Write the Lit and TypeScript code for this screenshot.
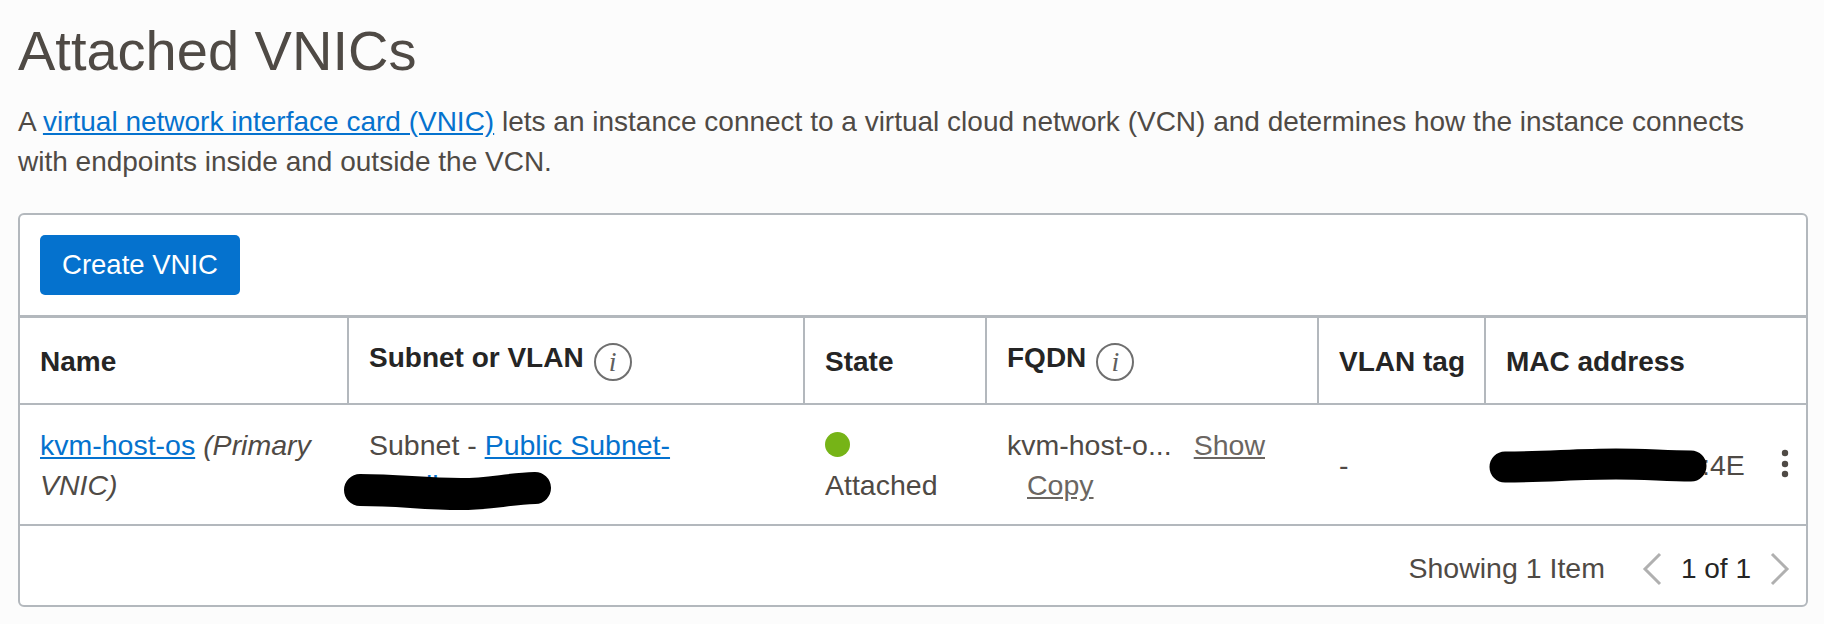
import { LitElement, css, html } from "lit";
import { customElement } from "lit/decorators.js";

@customElement("app-root")
export class AppRoot extends LitElement {
  static styles = css`
    :host {
      display: block;
      box-sizing: border-box;
      height: 624px;
      padding: 20px 16px 0 18px;
      background: #fcfcfc;
      color: #4f4a45;
      font-family: "Liberation Sans", Arial, sans-serif;
      overflow: hidden;
    }
    h1 {
      margin: 0;
      font-size: 56px;
      font-weight: 400;
      line-height: 62px;
    }
    p {
      margin: 20px 0 0;
      font-size: 28px;
      line-height: 40px;
    }
    a {
      color: #0572ce;
      text-decoration: underline;
    }
    .card {
      margin-top: 31px;
      background: #fff;
      border: 2px solid #b3b8bd;
      border-radius: 6px;
      height: 394px;
      box-sizing: border-box;
    }
    .toolbar {
      height: 103px;
      padding: 20px 0 0 20px;
      box-sizing: border-box;
      border-bottom: 3px solid #b3b8bd;
    }
    button {
      display: block;
      width: 200px;
      height: 60px;
      border: 0;
      border-radius: 5px;
      background: #0572ce;
      color: #fff;
      font: 400 27.5px "Liberation Sans", Arial, sans-serif;
    }
    .grid {
      display: grid;
      grid-template-columns: 329px 456px 182px 332px 167px 1fr;
    }
    .th {
      display: flex;
      align-items: center;
      gap: 10px;
      height: 87px;
      padding: 3px 0 0 20px;
      box-sizing: border-box;
      color: #252525;
      font-size: 28px;
      font-weight: 700;
      white-space: nowrap;
      border-bottom: 2px solid #b3b8bd;
      border-right: 2px solid #b3b8bd;
    }
    .th:nth-child(6) {
      border-right: 0;
    }
    .th.with-info span {
      margin-top: -8px;
    }
    .info {
      display: flex;
      align-items: center;
      justify-content: center;
      width: 38px;
      height: 38px;
      box-sizing: border-box;
      border: 2px solid #6f6f6f;
      border-radius: 50%;
      color: #5f5f5f;
      font: italic 400 28px "Liberation Serif", serif;
    }
    .td {
      position: relative;
      height: 121px;
      padding: 20px 10px 0 20px;
      box-sizing: border-box;
      font-size: 28.5px;
      line-height: 40px;
      border-bottom: 2px solid #b3b8bd;
    }
    em {
      font-style: italic;
    }
    .dot {
      display: block;
      width: 25px;
      height: 25px;
      margin-top: 7px;
      margin-bottom: 8px;
      border-radius: 50%;
      background: #76b417;
    }
    .muted {
      color: #6b6662;
    }
    .fqdn-copy {
      margin-left: 20px;
    }
    .fqdn-show {
      margin-left: 22px;
    }
    .mid {
      padding-top: 40px;
    }
    .mac {
      padding-left: 216px;
      white-space: nowrap;
    }
    .blob {
      position: absolute;
      pointer-events: none;
    }
    .kebab {
      position: absolute;
      left: 293px;
      top: 44px;
    }
    .footer {
      display: flex;
      align-items: center;
      justify-content: flex-end;
      height: 79px;
      box-sizing: border-box;
      padding: 6px 16px 0 0;
      font-size: 28.5px;
    }
    .pages {
      margin: 0 19px;
      color: #252525;
      font-size: 28px;
    }
    .count {
      margin-right: 37px;
    }
  `;

  private info() {
    return html`<i class="info">i</i>`;
  }

  render() {
    return html`
      <h1>Attached VNICs</h1>
      <p>
        A <a href="#">virtual network interface card (VNIC)</a> lets an instance connect to a virtual cloud network (VCN) and determines how the instance connects<br />with endpoints inside and outside the VCN.
      </p>
      <div class="card">
        <div class="toolbar"><button>Create VNIC</button></div>
        <div class="grid">
          <div class="th">Name</div>
          <div class="th with-info"><span>Subnet or VLAN</span>${this.info()}</div>
          <div class="th">State</div>
          <div class="th with-info"><span>FQDN</span>${this.info()}</div>
          <div class="th">VLAN tag</div>
          <div class="th">MAC address</div>

          <div class="td"><a href="#">kvm-host-os</a> <em>(Primary VNIC)</em></div>
          <div class="td">
            Subnet - <a href="#">Public Subnet-<br />xxxxll</a>
            <!-- redaction scribble from the original screenshot -->
            <svg class="blob" style="left:-8px;top:60px" width="215" height="50" viewBox="0 0 215 50">
              <path d="M19 25 C60 25 80 29 120 29 C150 29 165 24 194 23" fill="none" stroke="#000" stroke-width="32" stroke-linecap="round" />
            </svg>
          </div>
          <div class="td">
            <span class="dot"></span>
            Attached
          </div>
          <div class="td">
            kvm-host-o...<a class="muted fqdn-show" href="#">Show</a><br />
            <a class="muted fqdn-copy" href="#">Copy</a>
          </div>
          <div class="td mid">-</div>
          <div class="td mid mac">
            :4E
            <svg class="blob" style="left:0;top:40px" width="225" height="42" viewBox="0 0 225 42">
              <path d="M19 22 C60 22 90 19 130 19 C160 19 180 21 205 21" fill="none" stroke="#000" stroke-width="31" stroke-linecap="round" />
            </svg>
            <svg class="kebab" width="12" height="32" viewBox="0 0 12 32">
              <circle cx="6" cy="4" r="3.2" fill="#4f4a45" />
              <circle cx="6" cy="15" r="3.2" fill="#4f4a45" />
              <circle cx="6" cy="25" r="3.2" fill="#4f4a45" />
            </svg>
          </div>
        </div>
        <div class="footer">
          <span class="count">Showing 1 Item</span>
          <svg width="20" height="34" viewBox="0 0 20 34"><path d="M18 2 L3 17 L18 32" fill="none" stroke="#b0b0b0" stroke-width="3" /></svg>
          <span class="pages">1 of 1</span>
          <svg width="20" height="34" viewBox="0 0 20 34"><path d="M2 2 L17 17 L2 32" fill="none" stroke="#b0b0b0" stroke-width="3" /></svg>
        </div>
      </div>
    `;
  }
}
